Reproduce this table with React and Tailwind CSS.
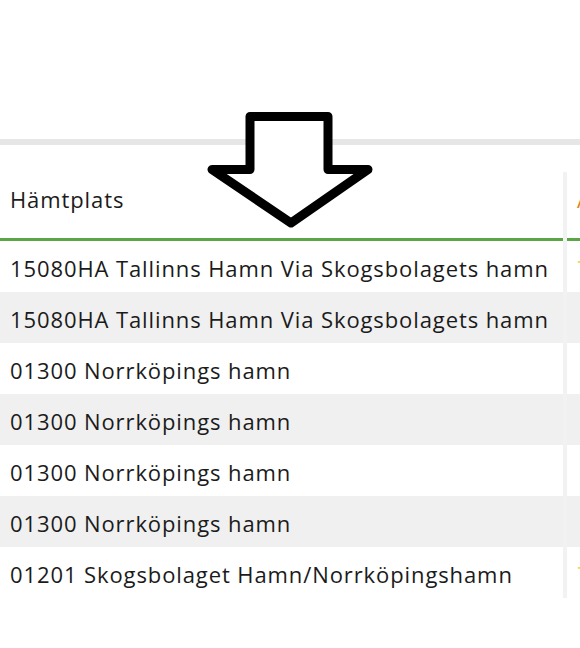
const rows = [
  { place: "15080HA Tallinns Hamn Via Skogsbolagets hamn", next: "7" },
  { place: "15080HA Tallinns Hamn Via Skogsbolagets hamn", next: "" },
  { place: "01300 Norrköpings hamn", next: "" },
  { place: "01300 Norrköpings hamn", next: "" },
  { place: "01300 Norrköpings hamn", next: "" },
  { place: "01300 Norrköpings hamn", next: "" },
  { place: "01201 Skogsbolaget Hamn/Norrköpingshamn", next: "7" },
];

const DownArrow = () => (
  <svg
    className="absolute left-[200px] top-[104px]"
    width="180"
    height="132"
    viewBox="200 104 180 132"
  >
    <polygon
      points="250,116.5 328,116.5 328,169.5 368,169.5 291,223 212,169.5 250,169.5"
      fill="white"
      stroke="black"
      strokeWidth="9"
      strokeLinejoin="round"
    />
  </svg>
);

const App = () => {
  return (
    <div
      className="relative w-[580px] h-[648px] overflow-hidden bg-white text-[#1b1b1b]"
      style={{ fontFamily: '"Open Sans", "Noto Sans", sans-serif' }}
    >
      <div className="h-[139px]" />
      <div className="h-[6px] bg-[#e6e6e6]" />
      <div className="h-[27px]" />

      {/* Grid */}
      <div className="flex w-[700px]">
        <div className="w-[563px] shrink-0">
          <div className="h-[69px] flex items-center pl-[10px] pb-[12px] text-[22px] tracking-[0.9px] border-b-[3px] border-[#5aa545]">
            Hämtplats
          </div>
          {rows.map((r, i) => (
            <div
              key={i}
              className={`h-[51px] flex items-center pl-[10px] pt-[3px] text-[22px] tracking-[0.9px] whitespace-nowrap ${
                i % 2 === 1 ? "bg-[#f0f0f0]" : "bg-white"
              }`}
            >
              {r.place}
            </div>
          ))}
        </div>
        <div className="w-[4px] shrink-0 bg-[#f2f2f2]" />
        <div className="w-[130px] shrink-0">
          <div className="h-[69px] flex items-center pl-[10px] pb-[12px] text-[22px] border-b-[3px] border-[#5aa545] text-[#d98a1c]">
            Avlastning
          </div>
          {rows.map((r, i) => (
            <div
              key={i}
              className={`h-[51px] flex items-center pl-[10px] pt-[3px] text-[22px] text-[#f3d64b] ${
                i % 2 === 1 ? "bg-[#f0f0f0]" : "bg-white"
              }`}
            >
              {r.next}
            </div>
          ))}
        </div>
      </div>

      <DownArrow />
    </div>
  );
};

export default App;
